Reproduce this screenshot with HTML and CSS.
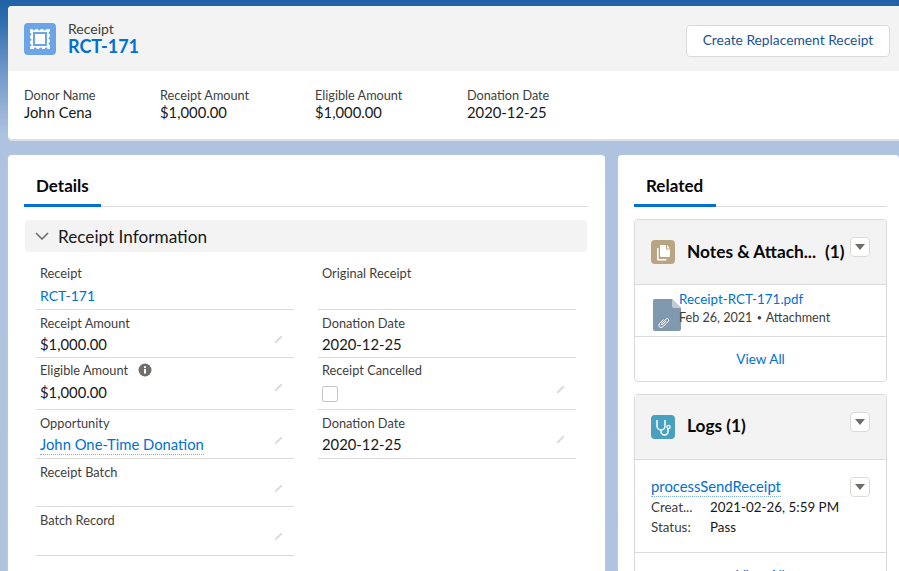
FILE: index.html
```html
<!DOCTYPE html>
<html lang="en">
<head>
<meta charset="utf-8">
<title>Receipt RCT-171</title>
<link rel="stylesheet" href="styles.css">
</head>
<body>
<div class="page">
  <header class="highlights">
    <div class="hl-top">
      <svg class="obj-icon" viewBox="0 0 32 32"><rect width="32" height="32" rx="4" fill="#6ba5e8"/><path fill="#fff" d="M6 6h2.500a1.400 1.400 0 0 0 2.800 0h2.600a1.400 1.400 0 0 0 2.800 0h2.600a1.400 1.400 0 0 0 2.800 0H26v2.500a1.400 1.400 0 0 0 0 2.800v2.600a1.400 1.400 0 0 0 0 2.800v2.600a1.400 1.400 0 0 0 0 2.800V26h-2.500a1.400 1.400 0 0 0-2.800 0h-2.600a1.400 1.400 0 0 0-2.800 0h-2.600a1.400 1.400 0 0 0-2.800 0H6v-2.500a1.400 1.400 0 0 0 0-2.800v-2.600a1.400 1.400 0 0 0 0-2.800v-2.600a1.400 1.400 0 0 0 0-2.800z"/><rect x="9" y="9" width="14" height="14" fill="#6ba5e8"/><rect x="11" y="11" width="10" height="10" fill="#fff"/></svg>
      <div class="hl-title">
        <div class="hl-type">Receipt</div>
        <div class="hl-name">RCT-171</div>
      </div>
      <button class="btn-action">Create Replacement Receipt</button>
    </div>
    <div class="hl-fields">
      <div class="hl-field hl-w1"><div class="hl-label">Donor Name</div><div class="hl-value">John Cena</div></div>
      <div class="hl-field hl-w2"><div class="hl-label">Receipt Amount</div><div class="hl-value">$1,000.00</div></div>
      <div class="hl-field hl-w3"><div class="hl-label">Eligible Amount</div><div class="hl-value">$1,000.00</div></div>
      <div class="hl-field"><div class="hl-label">Donation Date</div><div class="hl-value">2020-12-25</div></div>
    </div>
  </header>

  <div class="columns">
    <main class="panel panel-main">
      <div class="tabs"><span class="tab tab-details">Details</span></div>
      <div class="section-head">
        <svg class="chevron" viewBox="0 0 14 8"><path d="M1 1l6 6 6-6" fill="none" stroke="#706e6b" stroke-width="1.600"/></svg>
        <span>Receipt Information</span>
      </div>
      <div class="fields">
        <div class="field field-top"><div class="f-label">Receipt</div><div class="f-row"><a class="link link-id">RCT-171</a></div></div>
        <div class="field field-top"><div class="f-label">Original Receipt</div></div>
        <div class="field"><div class="f-label">Receipt Amount</div><div class="f-row"><span>$1,000.00</span><svg class="pencil" viewBox="0 0 10 10"><path d="M0.500 9.500l.8-2.300 5.700-5.700 1.500 1.500-5.700 5.700z" fill="#dcdcdc"/></svg></div></div>
        <div class="field"><div class="f-label">Donation Date</div><div class="f-row"><span>2020-12-25</span></div></div>
        <div class="field field-mid"><div class="f-label">Eligible Amount <svg class="info" viewBox="0 0 14 14"><circle cx="7" cy="7" r="6.500" fill="#706e6b"/><rect x="6" y="6" width="2" height="4.600" fill="#fff"/><rect x="6" y="3.200" width="2" height="1.900" fill="#fff"/></svg></div><div class="f-row"><span>$1,000.00</span><svg class="pencil" viewBox="0 0 10 10"><path d="M0.500 9.500l.8-2.300 5.700-5.700 1.500 1.500-5.700 5.700z" fill="#dcdcdc"/></svg></div></div>
        <div class="field field-mid"><div class="f-label">Receipt Cancelled</div><div class="f-row f-check"><span class="checkbox"></span><svg class="pencil" viewBox="0 0 10 10"><path d="M0.500 9.500l.8-2.300 5.700-5.700 1.500 1.500-5.700 5.700z" fill="#dcdcdc"/></svg></div></div>
        <div class="field"><div class="f-label">Opportunity</div><div class="f-row"><a class="link dotted">John One-Time Donation</a><svg class="pencil" viewBox="0 0 10 10"><path d="M0.500 9.500l.8-2.300 5.700-5.700 1.500 1.500-5.700 5.700z" fill="#dcdcdc"/></svg></div></div>
        <div class="field"><div class="f-label">Donation Date</div><div class="f-row"><span>2020-12-25</span><svg class="pencil" viewBox="0 0 10 10"><path d="M0.500 9.500l.8-2.300 5.700-5.700 1.500 1.500-5.700 5.700z" fill="#dcdcdc"/></svg></div></div>
        <div class="field"><div class="f-label">Receipt Batch</div><div class="f-row f-empty"><svg class="pencil" viewBox="0 0 10 10"><path d="M0.500 9.500l.8-2.300 5.700-5.700 1.500 1.500-5.700 5.700z" fill="#dcdcdc"/></svg></div></div>
        <div class="field-blank"></div>
        <div class="field"><div class="f-label">Batch Record</div><div class="f-row f-empty"><svg class="pencil" viewBox="0 0 10 10"><path d="M0.500 9.500l.8-2.300 5.700-5.700 1.500 1.500-5.700 5.700z" fill="#dcdcdc"/></svg></div></div>
      </div>
    </main>

    <aside class="panel panel-side">
      <div class="tabs"><span class="tab tab-related">Related</span></div>

      <section class="rcard">
        <div class="rhead">
          <svg class="ricon" viewBox="0 0 24 24"><rect width="24" height="24" rx="4" fill="#baa582"/><path fill="#fff" d="M10 5h5v3.500a1 1 0 0 0 1 1h3V16a1 1 0 0 1-1 1h-8a1 1 0 0 1-1-1V6a1 1 0 0 1 1-1z"/><path fill="#fff" d="M16 5l3 3.500h-3z"/><path fill="#fff" d="M7.600 8v10.200c0 .4.300.7.700.7h7.200v.9a.7.700 0 0 1-.7.700H7a1 1 0 0 1-1-1V8.700A.7.700 0 0 1 6.700 8z"/></svg>
          <h2 class="rtitle">Notes &amp; Attach...<span class="rcount">(1)</span></h2>
          <button class="drop"><span class="tri"></span></button>
        </div>
        <div class="rbody rbody-notes">
          <svg class="fileicon" viewBox="0 0 28 32"><path d="M2 0h17l9 9v21a2 2 0 0 1-2 2H2a2 2 0 0 1-2-2V2a2 2 0 0 1 2-2z" fill="#8199af"/><path d="M19 0l9 9h-7a2 2 0 0 1-2-2z" fill="#c1ccd7"/><path d="M10.500 20.500l-4 4a2.300 2.300 0 0 0 3.300 3.300l5.500-5.500a1.500 1.500 0 0 0-2.200-2.200l-4.600 4.600a.7.700 0 0 0 1 1l3.500-3.500" fill="none" stroke="#fff" stroke-width="1"/></svg>
          <div class="note-text">
            <a class="link note-link">Receipt-RCT-171.pdf</a>
            <div class="note-meta">Feb 26, 2021 <span class="bullet">•</span> Attachment</div>
          </div>
        </div>
        <div class="rfoot"><a class="link viewall">View All</a></div>
      </section>

      <section class="rcard">
        <div class="rhead">
          <svg class="ricon" viewBox="0 0 24 24"><rect width="24" height="24" rx="4" fill="#4aa0bf"/><path d="M6 5v6a4 4 0 0 0 8 0V5M10 15v1.500a3.500 3.500 0 0 0 7 0V14" fill="none" stroke="#fff" stroke-width="1.500"/><circle cx="17.500" cy="12" r="1.600" fill="none" stroke="#fff" stroke-width="1.200"/></svg>
          <h2 class="rtitle rtitle-logs">Logs (1)</h2>
          <button class="drop"><span class="tri"></span></button>
        </div>
        <div class="rbody rbody-logs">
          <div class="log-top">
            <a class="link dotted log-link">processSendReceipt</a>
            <button class="drop"><span class="tri"></span></button>
          </div>
          <dl class="log-meta">
            <dt>Creat...</dt><dd>2021-02-26, 5:59 PM</dd>
            <dt>Status:</dt><dd>Pass</dd>
          </dl>
        </div>
        <div class="rfoot"><a class="link viewall">View All</a></div>
      </section>
    </aside>
  </div>
</div>
</body>
</html>
```

FILE: styles.css
```css
* { box-sizing: border-box; }
html, body { margin: 0; height: 100%; overflow: hidden; }
body {
  font-family: "Lato", "Liberation Sans", sans-serif;
  color: #080707;
  background: linear-gradient(180deg, #1f62a6 0, #2d6cae 20px, #6f97c8 70px, #aec3df 135px, #b0c4df 100%);
}
.page { width: 899px; height: 571px; padding: 6px 0 0 8px; overflow: hidden; }

.highlights { background: #fff; border-radius: 4px 0 0 4px; height: 133px; box-shadow: 0 2px 0 #dde1e7; }
.hl-top { height: 65px; background: #f3f3f3; border-radius: 4px 0 0 0; display: flex; align-items: flex-start; padding: 17px 9px 0 16px; }
.obj-icon { width: 32px; height: 32px; flex: none; }
.hl-title { margin-left: 12px; margin-top: -2px; }
.hl-type { font-size: 14px; line-height: 15px; color: #3e3e3c; }
.hl-name { font-size: 18px; line-height: 20px; font-weight: 700; color: #0070d2; }
.btn-action { margin-left: auto; margin-top: 2px; width: 204px; height: 32px; border: 1px solid #dddbda; border-radius: 4px; background: #fff; color: #1b5297; font: 13.800px/28px "Lato", sans-serif; padding: 0 0 2px; }
.hl-fields { display: flex; padding: 16px 0 0 16px; }
.hl-w1 { width: 136px; }
.hl-w2 { width: 155px; }
.hl-w3 { width: 152px; }
.hl-label { font-size: 12.700px; line-height: 16px; color: #3e3e3c; }
.hl-value { font-size: 14.800px; line-height: 19px; color: #181818; }

.columns { display: flex; gap: 13px; margin-top: 16px; align-items: flex-start; }
.panel { background: #fff; border-radius: 4px 4px 0 0; height: 420px; box-shadow: 0 0 2px #c9d3e2; }
.panel-main { width: 597px; padding: 16px 17px 0 16px; flex: none; }
.panel-side { width: 281px; padding: 16px 12px 0 16px; flex: none; }

.tabs { height: 36px; border-bottom: 1px solid #dddbda; display: flex; }
.tab { display: block; height: 36px; padding: 5px 0 0 12px; font-size: 17px; line-height: 20px; font-weight: 700; border-bottom: 3px solid #0070d2; }
.tab-details { width: 77px; }
.tab-related { width: 82px; }

.section-head { margin: 13px 1px 0; height: 32px; background: #f3f3f3; border-radius: 4px; display: flex; align-items: center; padding-left: 10px; font-size: 17.200px; color: #181818; }
.chevron { width: 14px; height: 8px; margin-right: 9px; }

.fields { margin: 10px 12px 0 12px; display: grid; grid-template-columns: 258px 258px; column-gap: 24px; grid-template-rows: 48px 48px 52px 49px 48px 49px; }
.field { border-bottom: 1px solid #dddbda; padding: 5px 12px 0 4px; }
.field-top { padding-top: 3px; }
.field-mid { padding-top: 4px; }
.f-label { font-size: 12.800px; line-height: 16px; color: #3e3e3c; display: flex; align-items: center; gap: 10px; }
.f-row { display: flex; justify-content: space-between; align-items: center; font-size: 14.800px; line-height: 20px; margin-top: 3px; color: #181818; }
.field-top .f-row { margin-top: 5px; }
.field-mid .f-row { margin-top: 4px; }
.f-empty { height: 20px; }
.field-mid .f-check { margin-top: 6px; }
.checkbox { width: 16px; height: 16px; border: 1px solid #c9c7c5; border-radius: 2px; display: block; background: #fff; }
.pencil { width: 10px; height: 10px; flex: none; margin: 0 -2px 10px auto; }
.info { width: 14px; height: 14px; }
.link { color: #0070d2; text-decoration: none; }
.link-id { font-size: 14px; }
.dotted { border-bottom: 1px dotted #7fb1e0; }

.rcard { margin-top: 12px; border: 1px solid #dddbda; border-radius: 4px; overflow: hidden; background: #fff; }
.rcard + .rcard { margin-top: 12px; }
.rhead { height: 65px; background: #f3f3f3; border-bottom: 1px solid #dddbda; display: flex; align-items: flex-start; padding: 20px 16px 0 16px; }
.ricon { width: 24px; height: 24px; flex: none; }
.rtitle { margin: 0 0 0 12px; font-size: 17.300px; line-height: 24px; font-weight: 700; white-space: nowrap; }
.rtitle-logs { margin-top: -1px; }
.rcount { margin-left: 9px; }
.drop { width: 20px; height: 20px; padding: 0; border: 1px solid #dddbda; border-radius: 4px; background: #fff; display: flex; align-items: center; justify-content: center; flex: none; }
.rhead .drop { margin-left: auto; margin-top: -3px; }
.tri { width: 0; height: 0; border-left: 5px solid transparent; border-right: 5px solid transparent; border-top: 6px solid #706e6b; display: block; }

.rbody-notes { height: 51px; position: relative; padding: 4px 0 0 44px; }
.fileicon { position: absolute; left: 18px; top: 14px; width: 28px; height: 32px; }
.note-text { position: relative; }
.note-link { font-size: 13.400px; line-height: 20px; display: block; }
.note-meta { font-size: 12.600px; line-height: 18px; color: #3e3e3c; }
.bullet { font-size: 9px; vertical-align: 1px; margin: 0 1px; }
.rfoot { border-top: 1px solid #dddbda; height: 45px; display: flex; align-items: center; justify-content: center; font-size: 13.600px; }

.rbody-logs { height: 92px; padding: 16px 16px 0 16px; }
.log-top { display: flex; justify-content: space-between; align-items: flex-start; height: 20px; }
.log-top .drop { margin-top: 1px; }
.log-link { font-size: 14.800px; line-height: 20px; }
.log-meta { margin: 2px 0 0; display: grid; grid-template-columns: 59px 1fr; row-gap: 2px; font-size: 13.400px; line-height: 18px; }
.log-meta dt { color: #3e3e3c; }
.log-meta dd { margin: 0; color: #181818; }
```
